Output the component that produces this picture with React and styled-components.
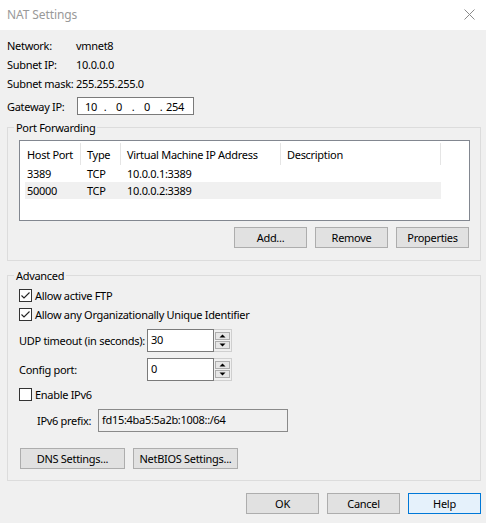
import React from 'react';
import styled, { createGlobalStyle } from 'styled-components';

const Global = createGlobalStyle`
  html, body { margin: 0; padding: 0; background: #f0f0f0; }
  body {
    font-family: "Noto Sans", "Open Sans", sans-serif;
    font-size: 11px;
    letter-spacing: -0.3px;
    color: #000;
  }
  * { box-sizing: border-box; }
  #root { width: 486px; height: 523px; }
`;

const Window = styled.div`
  width: 486px;
  height: 523px;
  display: flex;
  flex-direction: column;
  background: #f0f0f0;
  overflow: hidden;
`;

const TitleBar = styled.div`
  height: 30px;
  flex: none;
  background: #fff;
  display: flex;
  align-items: center;
  justify-content: space-between;
  padding: 0 11px 1px 7px;
`;

const Title = styled.span`
  color: #999;
  font-size: 12px;
  letter-spacing: -0.1px;
`;

const Body = styled.div`
  display: flex;
  flex-direction: column;
  padding: 6px 5px 0 7px;
`;

const InfoRow = styled.div`
  display: flex;
  align-items: center;
  height: ${(p) => p.$h || 19}px;
  margin-top: ${(p) => p.$mt || 0}px;
  white-space: nowrap;
`;

const InfoLabel = styled.span`
  width: ${(p) => p.$w || 69}px;
  flex: none;
`;

const IpBox = styled.div`
  width: 117px;
  height: 18px;
  border: 1px solid #7a7a7a;
  background: #fff;
  display: flex;
  align-items: center;
  padding-left: 2px;
`;

const Octet = styled.span`
  width: 22px;
  text-align: center;
`;

const Dot = styled.span`
  width: 6px;
  text-align: center;
`;

const Group = styled.fieldset`
  margin: ${(p) => p.$mt}px 0 0;
  padding: ${(p) => p.$pt}px 10px ${(p) => p.$pb}px 11px;
  border: 1px solid #dcdcdc;
  min-width: 0;
`;

const Legend = styled.legend`
  padding: 0 2px;
  margin-left: -5px;
  line-height: 15px;
`;

const ListBox = styled.div`
  height: 81px;
  border: 1px solid #828790;
  background: #fff;
  padding-top: 2px;
`;

const HeaderRow = styled.div`
  display: grid;
  grid-template-columns: 61px 40px 160px 160px;
  height: 22px;
`;

const HeaderCell = styled.div`
  display: flex;
  align-items: center;
  padding-left: ${(p) => (p.$first ? 7 : 6)}px;
  border-right: 1px solid #e5e5e5;
  white-space: nowrap;
`;

const DataRow = styled.div`
  display: grid;
  grid-template-columns: 56px 40px 160px 160px;
  height: 17px;
  margin-left: 5px;
  width: 416px;
  background: ${(p) => (p.$selected ? '#f0f0f0' : 'transparent')};
`;

const DataCell = styled.div`
  display: flex;
  align-items: center;
  padding-left: ${(p) => (p.$first ? 2 : 6)}px;
  white-space: nowrap;
`;

const ButtonRow = styled.div`
  display: flex;
  justify-content: ${(p) => (p.$start ? 'flex-start' : 'flex-end')};
  gap: 8px;
  margin-top: ${(p) => p.$mt}px;
  padding: 0 ${(p) => p.$pr || 0}px 0 ${(p) => p.$pl || 0}px;
`;

const Button = styled.button`
  width: ${(p) => p.$w || 73}px;
  height: 21px;
  padding: 0;
  margin: 0;
  font: inherit;
  letter-spacing: inherit;
  color: #000;
  background: ${(p) => (p.$primary ? '#e5f1fb' : '#e1e1e1')};
  border: 1px solid ${(p) => (p.$primary ? '#0078d7' : '#adadad')};
  border-radius: 0;
`;

const CheckRow = styled.label`
  display: flex;
  align-items: center;
  gap: 3px;
  height: 19px;
  margin-top: ${(p) => p.$mt || 0}px;
  white-space: nowrap;
`;

const Box = styled.span`
  width: 13px;
  height: 13px;
  flex: none;
  border: 1px solid #333;
  background: #fff;
  display: flex;
  align-items: center;
  justify-content: center;
`;

const FieldRow = styled.div`
  display: flex;
  align-items: center;
  height: 23px;
  margin-top: ${(p) => p.$mt || 0}px;
  padding-left: ${(p) => p.$indent || 0}px;
`;

const FieldLabel = styled.span`
  width: ${(p) => p.$w}px;
  flex: none;
  white-space: nowrap;
`;

const TextBox = styled.div`
  width: ${(p) => p.$w}px;
  height: 23px;
  border: 1px solid ${(p) => (p.$disabled ? '#8a8a8a' : '#7a7a7a')};
  background: ${(p) => (p.$disabled ? '#f0f0f0' : '#fff')};
  display: flex;
  align-items: center;
  padding: 0 3px 2px;
  white-space: nowrap;
`;

const Spinner = styled.div`
  width: 18px;
  height: 23px;
  border: 1px solid #cfcfcf;
  border-left: none;
  background: #f0f0f0;
  display: flex;
  flex-direction: column;
  gap: 1px;
  padding: 2px 1px 2px 1px;
`;

const SpinButton = styled.div`
  flex: 1;
  border: 1px solid #adadad;
  background: #e6e6e6;
  display: flex;
  align-items: center;
  justify-content: center;
`;

const Triangle = ({ down }) => (
  <svg width="7" height="4" viewBox="0 0 7 4">
    <path d={down ? 'M0.5 0.5 L6.5 0.5 L3.5 3.5 Z' : 'M0.5 3.5 L6.5 3.5 L3.5 0.5 Z'} fill="#000" />
  </svg>
);

const Check = () => (
  <svg width="11" height="11" viewBox="0 0 11 11">
    <path d="M1.5 5.5 L4 8 L9.5 2.5" fill="none" stroke="#222" strokeWidth="1.1" />
  </svg>
);

const CloseIcon = () => (
  <svg width="11" height="11" viewBox="0 0 11 11">
    <path d="M0.5 0.5 L10.5 10.5 M10.5 0.5 L0.5 10.5" stroke="#8a8a8a" strokeWidth="1" />
  </svg>
);

function NumberField({ value }) {
  return (
    <>
      <TextBox $w={67}>{value}</TextBox>
      <Spinner>
        <SpinButton><Triangle /></SpinButton>
        <SpinButton><Triangle down /></SpinButton>
      </Spinner>
    </>
  );
}

export default function App() {
  return (
    <Window>
      <Global />
      <TitleBar>
        <Title>NAT Settings</Title>
        <CloseIcon />
      </TitleBar>
      <Body>
        <InfoRow><InfoLabel>Network:</InfoLabel><span>vmnet8</span></InfoRow>
        <InfoRow><InfoLabel>Subnet IP:</InfoLabel><span>10.0.0.0</span></InfoRow>
        <InfoRow><InfoLabel>Subnet mask:</InfoLabel><span>255.255.255.0</span></InfoRow>
        <InfoRow $h={18} $mt={4}>
          <InfoLabel $w={70}>Gateway IP:</InfoLabel>
          <IpBox>
            <Octet>10</Octet><Dot>.</Dot>
            <Octet>0</Octet><Dot>.</Dot>
            <Octet>0</Octet><Dot>.</Dot>
            <Octet>254</Octet>
          </IpBox>
        </InfoRow>

        <Group $mt={5} $pt={5} $pb={12}>
          <Legend>Port Forwarding</Legend>
          <ListBox>
            <HeaderRow>
              <HeaderCell $first>Host Port</HeaderCell>
              <HeaderCell>Type</HeaderCell>
              <HeaderCell>Virtual Machine IP Address</HeaderCell>
              <HeaderCell>Description</HeaderCell>
            </HeaderRow>
            <DataRow>
              <DataCell $first>3389</DataCell>
              <DataCell>TCP</DataCell>
              <DataCell>10.0.0.1:3389</DataCell>
              <DataCell></DataCell>
            </DataRow>
            <DataRow $selected>
              <DataCell $first>50000</DataCell>
              <DataCell>TCP</DataCell>
              <DataCell>10.0.0.2:3389</DataCell>
              <DataCell></DataCell>
            </DataRow>
          </ListBox>
          <ButtonRow $mt={6} $pr={1}>
            <Button>Add...</Button>
            <Button>Remove</Button>
            <Button>Properties</Button>
          </ButtonRow>
        </Group>

        <Group $mt={7} $pt={3} $pb={11}>
          <Legend>Advanced</Legend>
          <CheckRow><Box><Check /></Box>Allow active FTP</CheckRow>
          <CheckRow><Box><Check /></Box>Allow any Organizationally Unique Identifier</CheckRow>
          <FieldRow $mt={5}>
            <FieldLabel $w={128}>UDP timeout (in seconds):</FieldLabel>
            <NumberField value="30" />
          </FieldRow>
          <FieldRow $mt={6}>
            <FieldLabel $w={128}>Config port:</FieldLabel>
            <NumberField value="0" />
          </FieldRow>
          <CheckRow $mt={4}><Box />Enable IPv6</CheckRow>
          <FieldRow $mt={5} $indent={18}>
            <FieldLabel $w={61}>IPv6 prefix:</FieldLabel>
            <TextBox $w={190} $disabled>fd15:4ba5:5a2b:1008::/64</TextBox>
          </FieldRow>
          <ButtonRow $start $mt={16} $pl={1}>
            <Button $w={105}>DNS Settings...</Button>
            <Button $w={105}>NetBIOS Settings...</Button>
          </ButtonRow>
        </Group>

        <ButtonRow $mt={12}>
          <Button>OK</Button>
          <Button>Cancel</Button>
          <Button $primary>Help</Button>
        </ButtonRow>
      </Body>
    </Window>
  );
}
